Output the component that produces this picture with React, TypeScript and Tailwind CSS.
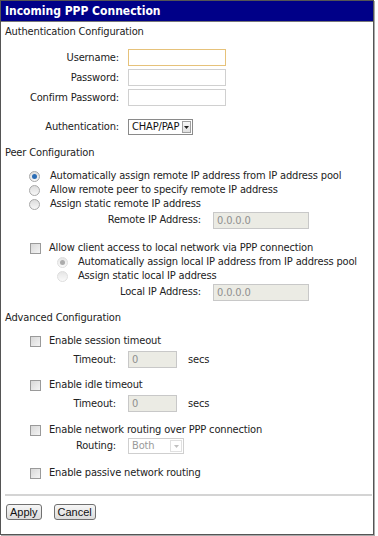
import React from "react";

const font = { fontFamily: '"DejaVu Sans Condensed", "Liberation Sans", sans-serif' };

function Radio({ checked = false, faded = false }: { checked?: boolean; faded?: boolean }) {
  return (
    <span
      className={`inline-flex w-[11px] h-[11px] shrink-0 items-center justify-center rounded-full border bg-gradient-to-b from-[#dcdcdc] to-[#f8f8f8] ${
        faded ? "border-[#d0d0d0] opacity-70" : "border-[#a8a8a8]"
      }`}
    >
      {checked && (
        <span className={`w-[5px] h-[5px] rounded-full ${faded ? "bg-[#8a8a8a]" : "bg-[#2c6db5]"}`} />
      )}
    </span>
  );
}

function Check() {
  return (
    <span className="inline-block w-[11px] h-[11px] shrink-0 border border-[#9a9a9a] bg-gradient-to-br from-[#d8d8d8] to-[#f4f4f4]" />
  );
}

function TextBox({ w, value = "", disabled = false, focus = false }: { w: string; value?: string; disabled?: boolean; focus?: boolean }) {
  return (
    <div
      className={`${w} h-[17px] border px-[3px] text-[11px] leading-[15px] ${
        disabled ? "bg-[#ebebe4] border-[#c8c8c8] text-[#8f8f8f]" : "bg-white border-[#d0d0d0]"
      } ${focus ? "border-[#e6c27a]" : ""}`}
    >
      {value}
    </div>
  );
}

function Select({ value, disabled = false, w }: { value: string; disabled?: boolean; w: string }) {
  return (
    <div
      className={`${w} h-[16px] flex items-center border bg-white pr-[1px] ${
        disabled ? "border-[#cfcfcf] text-[#9a9a9a]" : "border-[#8a8a8a] text-[#111]"
      }`}
    >
      <span className="flex-1 px-[3px] text-[11px] leading-[14px]">{value}</span>
      <span
        className={`w-[12px] h-[12px] flex items-center justify-center border ${
          disabled ? "border-[#e0e0e0] bg-white" : "border-[#a0a0a0] bg-gradient-to-b from-[#f8f8f8] to-[#e0e0e0]"
        }`}
      >
        <svg width="5" height="3" viewBox="0 0 5 3">
          <path d="M0 0h5L2.5 3z" fill={disabled ? "#c0c0c0" : "#222"} />
        </svg>
      </span>
    </div>
  );
}

function Option({ children, radio, checked, faded }: { children: React.ReactNode; radio?: boolean; checked?: boolean; faded?: boolean }) {
  return (
    <div className={`flex items-center h-[14px] ${radio ? "gap-[10px]" : "gap-[8px]"}`}>
      {radio ? <Radio checked={checked} faded={faded} /> : <Check />}
      <span>{children}</span>
    </div>
  );
}

export default function App() {
  return (
    <div className="w-[378px] h-[536px] bg-white text-[11px] text-[#222] tracking-[-0.15px]" style={font}>
      <div className="w-[374px] h-[535px] border border-[#555] shadow-[1px_1px_0_#aaa] flex flex-col">
        <div className="h-[21px] bg-[#000088] border-b border-[#777] px-[4px] flex items-center">
          <span className="text-white font-bold text-[12px] tracking-normal">Incoming PPP Connection</span>
        </div>

        <div className="pl-[4px] pr-[2px] flex flex-col leading-[14px]">
          <div className="mt-[3px] h-[14px]">Authentication Configuration</div>

          <div className="mt-[10px] flex flex-col gap-[3px]">
            {[
              ["Username:", true],
              ["Password:", false],
              ["Confirm Password:", false],
            ].map(([label, focus]) => (
              <div key={label as string} className="flex items-center gap-[9px]">
                <span className="w-[114px] text-right">{label}</span>
                <TextBox w="w-[98px]" focus={focus as boolean} />
              </div>
            ))}
          </div>

          <div className="mt-[13px] flex items-center gap-[9px]">
            <span className="w-[114px] text-right">Authentication:</span>
            <Select value="CHAP/PAP" w="w-[65px]" />
          </div>

          <div className="mt-[11px] h-[14px]">Peer Configuration</div>

          <div className="mt-[9px] pl-[24px] flex flex-col">
            <Option radio checked>Automatically assign remote IP address from IP address pool</Option>
            <Option radio>Allow remote peer to specify remote IP address</Option>
            <Option radio>Assign static remote IP address</Option>
            <div className="flex items-center gap-[12px]">
              <span className="w-[172px] text-right">Remote IP Address:</span>
              <div className="h-[18px] flex items-center">
                <TextBox w="w-[96px]" value="0.0.0.0" disabled />
              </div>
            </div>
          </div>

          <div className="mt-[12px] pl-[25px] flex flex-col">
            <Option>Allow client access to local network via PPP connection</Option>
            <div className="pl-[27px] flex flex-col">
              <Option radio checked faded>Automatically assign local IP address from IP address pool</Option>
              <Option radio faded>Assign static local IP address</Option>
            </div>
            <div className="flex items-center gap-[12px]">
              <span className="w-[171px] text-right">Local IP Address:</span>
              <div className="h-[18px] flex items-center">
                <TextBox w="w-[96px]" value="0.0.0.0" disabled />
              </div>
            </div>
          </div>

          <div className="mt-[10px] h-[14px]">Advanced Configuration</div>

          <div className="pl-[25px] flex flex-col">
            {[
              ["Enable session timeout", "mt-[9px]"],
              ["Enable idle timeout", "mt-[10px]"],
            ].map(([label, mt]) => (
              <div key={label} className={`${mt} flex flex-col`}>
                <Option>{label}</Option>
                <div className="mt-[3px] flex items-center">
                  <span className="w-[86px] text-right">Timeout:</span>
                  <span className="ml-[12px]">
                    <TextBox w="w-[49px]" value="0" disabled />
                  </span>
                  <span className="ml-[11px]">secs</span>
                </div>
              </div>
            ))}

            <div className="mt-[11px] flex flex-col">
              <Option>Enable network routing over PPP connection</Option>
              <div className="mt-[1px] flex items-center">
                <span className="w-[86px] text-right">Routing:</span>
                <span className="ml-[12px]">
                  <Select value="Both" w="w-[56px]" disabled />
                </span>
              </div>
            </div>

            <div className="mt-[12px]">
              <Option>Enable passive network routing</Option>
            </div>
          </div>

          <div className="mt-[14px] h-[2px] bg-[#d4d4d4] mr-[-1px]" />

          <div className="mt-[8px] flex items-center gap-[12px] pl-[1px]">
            {["Apply", "Cancel"].map((b) => (
              <button
                key={b}
                className="h-[16px] px-[3px] border border-[#707070] rounded-[3px] bg-gradient-to-b from-[#f6f6f6] to-[#dcdcdc] text-[11px] leading-[14px] text-[#111] tracking-normal"
                style={{ fontFamily: '"Liberation Sans", sans-serif' }}
              >
                {b}
              </button>
            ))}
          </div>
        </div>
      </div>
    </div>
  );
}
